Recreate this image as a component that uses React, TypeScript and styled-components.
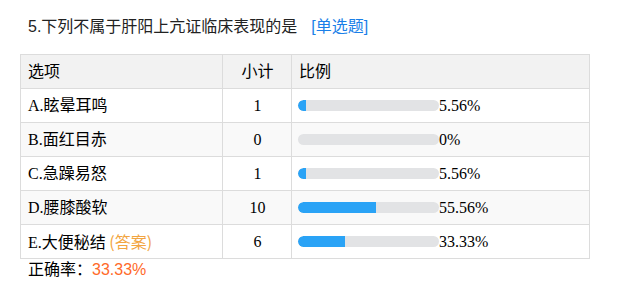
import styled, { createGlobalStyle } from "styled-components";

interface Option {
  label: string;
  count: number;
  percent: number;
  answer?: boolean;
}

const options: Option[] = [
  { label: "A.眩晕耳鸣", count: 1, percent: 5.56 },
  { label: "B.面红目赤", count: 0, percent: 0 },
  { label: "C.急躁易怒", count: 1, percent: 5.56 },
  { label: "D.腰膝酸软", count: 10, percent: 55.56 },
  { label: "E.大便秘结", count: 6, percent: 33.33, answer: true },
];

const GlobalStyle = createGlobalStyle`
  body {
    margin: 0;
    background: #fff;
    color: #000;
  }
`;

const Page = styled.div`
  width: 570px;
  padding: 14px 0 0 20px;
`;

const Title = styled.div`
  padding-left: 8px;
  height: 26px;
  line-height: 26px;
  font-family: "Liberation Sans", "Noto Sans CJK SC", sans-serif;
  font-size: 16px;
  color: #222;
  margin-bottom: 14px;
`;

const QType = styled.span`
  color: #1a7fe8;
  margin-left: 14px;
`;

const Table = styled.table`
  width: 570px;
  border-collapse: collapse;
  font-family: "Liberation Serif", "Noto Sans CJK SC", serif;
  font-size: 16px;
  table-layout: fixed;
`;

const Row = styled.tr<{ $shade: "head" | "odd" | "even" }>`
  height: 34px;
  background: ${(p) =>
    p.$shade === "head" ? "#f2f2f2" : p.$shade === "even" ? "#f9f9f9" : "#fff"};
`;

const Cell = styled.td<{ $center?: boolean }>`
  border: 1px solid #dcdcdc;
  padding: 0 6px 0 7px;
  text-align: ${(p) => (p.$center ? "center" : "left")};
  line-height: 20px;
  white-space: nowrap;
`;

const BarCell = styled.div`
  display: flex;
  align-items: center;
`;

const Track = styled.div`
  width: 141px;
  height: 11px;
  border-radius: 6px;
  background: #e2e3e5;
  overflow: hidden;
  margin-left: -1px;
`;

const Fill = styled.div`
  height: 100%;
  background: #2aa3f6;
  border-radius: 6px 0 0 6px;
`;

const Answer = styled.span`
  font-family: "Noto Sans CJK SC", sans-serif;
  color: #f2a541;
`;

const Accuracy = styled.div`
  padding-left: 8px;
  line-height: 22px;
  font-family: "Liberation Sans", "Noto Sans CJK SC", sans-serif;
  font-size: 16px;
`;

const Rate = styled.span`
  color: #ff6a2a;
`;

export default function App() {
  return (
    <Page>
      <GlobalStyle />
      <Title>
        5.下列不属于肝阳上亢证临床表现的是
        <QType>[单选题]</QType>
      </Title>
      <Table>
        <colgroup>
          <col style={{ width: 202 }} />
          <col style={{ width: 69 }} />
          <col />
        </colgroup>
        <tbody>
          <Row $shade="head">
            <Cell>选项</Cell>
            <Cell $center>小计</Cell>
            <Cell>比例</Cell>
          </Row>
          {options.map((o, i) => (
            <Row key={o.label} $shade={i % 2 === 1 ? "even" : "odd"}>
              <Cell>
                {o.label}
                {o.answer && <Answer> (答案)</Answer>}
              </Cell>
              <Cell $center>{o.count}</Cell>
              <Cell>
                <BarCell>
                  <Track>
                    <Fill style={{ width: `${o.percent}%` }} />
                  </Track>
                  {o.percent}%
                </BarCell>
              </Cell>
            </Row>
          ))}
        </tbody>
      </Table>
      <Accuracy>
        正确率：<Rate>33.33%</Rate>
      </Accuracy>
    </Page>
  );
}
